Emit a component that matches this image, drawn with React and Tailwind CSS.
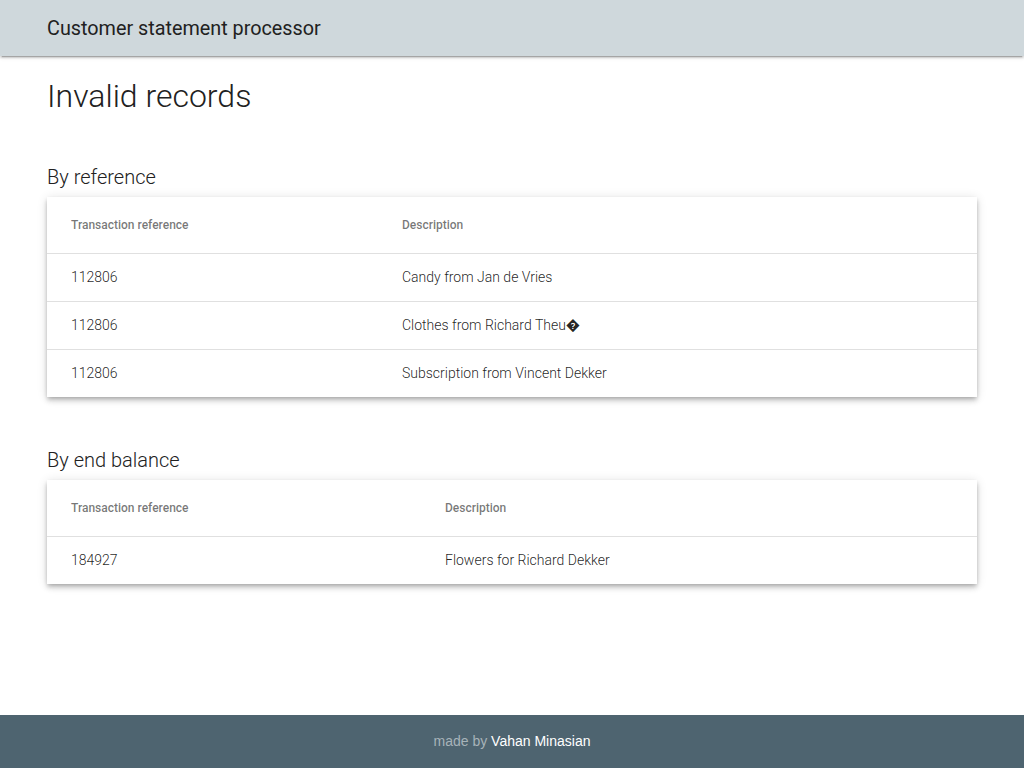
import React from "react";

const shadow = "shadow-[0_4px_5px_0_rgba(0,0,0,0.14),0_1px_10px_0_rgba(0,0,0,0.12),0_2px_4px_-1px_rgba(0,0,0,0.2)]";

function DataTable({ rows, firstColClass }) {
  return (
    <div className={`bg-white ${shadow}`}>
      <table className="w-full border-collapse text-left">
        <thead>
          <tr className="h-[56px]">
            <th className={`${firstColClass} pl-[24px] pr-[18px] text-[12px] font-medium text-black/[0.54] align-middle whitespace-nowrap`}>Transaction reference</th>
            <th className="pl-[18px] pr-[24px] text-[12px] font-medium text-black/[0.54] align-middle">Description</th>
          </tr>
        </thead>
        <tbody>
          {rows.map((r, i) => (
            <tr key={i} className="h-[48px] border-t border-black/[0.12]">
              <td className="pl-[24px] pr-[18px] text-[14px] font-light text-black/[0.87]">{r[0]}</td>
              <td className="pl-[18px] pr-[24px] text-[14px] font-light text-black/[0.87]">{r[1]}</td>
            </tr>
          ))}
        </tbody>
      </table>
    </div>
  );
}

export default function App() {
  return (
    <div className="min-h-[768px] flex flex-col bg-white font-['Roboto',sans-serif]">
      <header className="h-[56px] bg-[#cfd8dc] flex items-center px-[47px] pt-[2px] shadow-[0_2px_2px_0_rgba(0,0,0,0.14),0_3px_1px_-2px_rgba(0,0,0,0.2),0_1px_5px_0_rgba(0,0,0,0.12)] relative z-10">
        <span className="text-[19.8px] text-[#212121] leading-none">Customer statement processor</span>
      </header>
      <main className="flex-1 px-[47px]">
        <h1 className="text-[32px] font-light leading-[40px] text-[#212121] mt-[20px]">Invalid records</h1>
        <h2 className="text-[20px] font-light leading-[28px] text-[#212121] mt-[47px] mb-[6px]">By reference</h2>
        <DataTable
          firstColClass="w-[337px]"
          rows={[
            ["112806", "Candy from Jan de Vries"],
            ["112806", "Clothes from Richard Theu\uFFFD"],
            ["112806", "Subscription from Vincent Dekker"],
          ]}
        />
        <h2 className="text-[20px] font-light leading-[28px] text-[#212121] mt-[49px] mb-[6px]">By end balance</h2>
        <DataTable firstColClass="w-[380px]" rows={[["184927", "Flowers for Richard Dekker"]]} />
      </main>
      <footer className="h-[53px] bg-[#4e6470] flex items-center justify-center font-['Liberation_Sans',sans-serif] text-[14px]">
        <span className="text-[#a7b3b9]">made by&nbsp;</span>
        <span className="text-white">Vahan Minasian</span>
      </footer>
    </div>
  );
}
